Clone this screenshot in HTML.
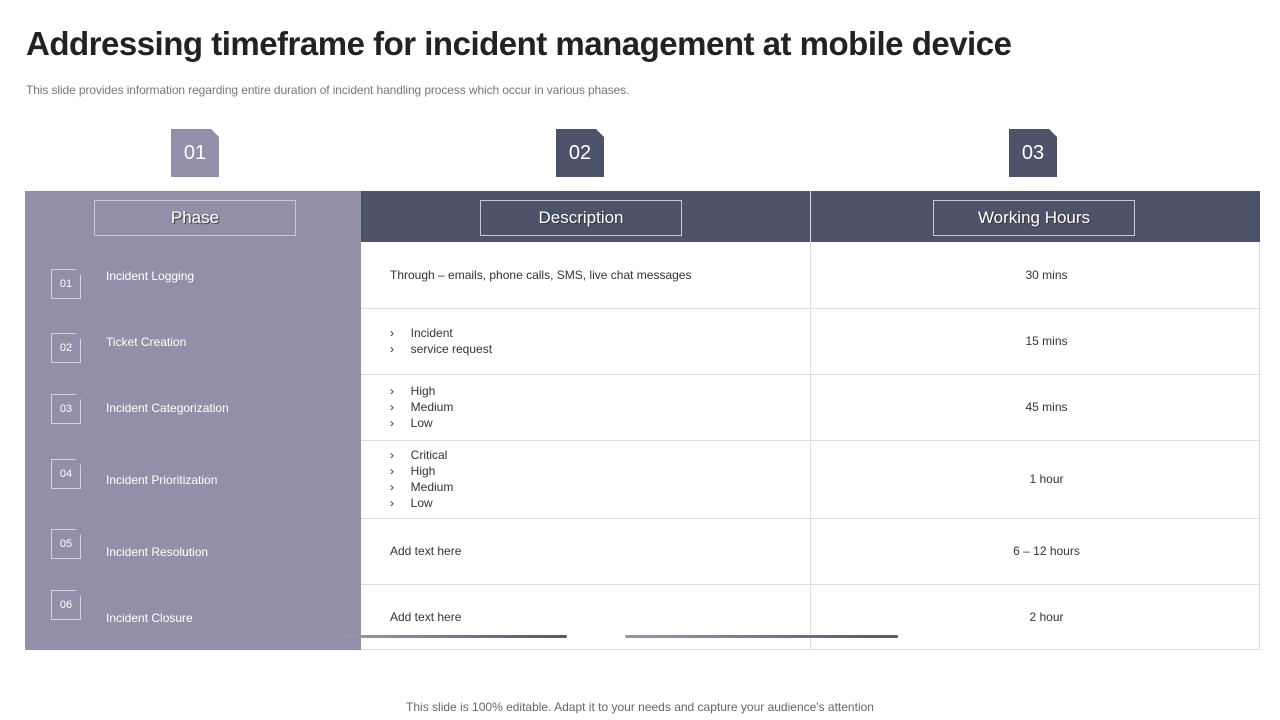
<!DOCTYPE html><html><head><style>
body{margin:0;width:1280px;height:720px;background:#fff;font-family:"Liberation Sans",sans-serif;position:relative;overflow:hidden}
.a{position:absolute}
h1{position:absolute;left:26px;top:25px;margin:0;font-size:33px;font-weight:bold;color:#222;letter-spacing:-0.5px}
.tab{position:absolute;top:129px;width:48px;height:48px;color:#fff;font-size:20px;text-align:center;line-height:48px;clip-path:polygon(0 0,40px 0,48px 8px,48px 48px,0 48px)}
.hb{position:absolute;top:200px;height:36px;border:1px solid #c9c7d6;color:#fff;font-size:17px;text-align:center;line-height:34px;text-shadow:1px 1px 1px #333;box-sizing:border-box}
.bd{position:absolute;left:51px;width:30px;height:30px;border:1px solid #d5d2e0;box-sizing:border-box;color:#fff;font-size:11px;text-align:center;line-height:28px;clip-path:polygon(0 0,24px 0,30px 6px,30px 30px,0 30px)}
.lb{position:absolute;left:106px;color:#fff;font-size:12px}
.t{position:absolute;font-size:12px;color:#333;line-height:16px}
.h{position:absolute;left:822px;width:449px;text-align:center;font-size:12px;color:#333}
.ln{position:absolute;left:361px;width:898px;height:1px;background:#ddd}
</style></head><body>
<h1>Addressing timeframe for incident management at mobile device</h1>
<div class="a" style="left:26px;top:83px;font-size:12px;color:#777;letter-spacing:-0.1px">This slide provides information regarding entire duration of incident handling process which occur in various phases.</div>
<div class="tab" style="left:171px;background:#948fa8">01</div>
<div class="tab" style="left:556px;background:#4d5469">02</div>
<div class="tab" style="left:1009px;background:#4d5469">03</div>
<div class="a" style="left:25px;top:191px;width:1235px;height:459px;border:1px solid #ddd;box-sizing:border-box"></div>
<div class="a" style="left:25px;top:191px;width:336px;height:459px;background:#948fa8"></div>
<div class="a" style="left:361px;top:191px;width:899px;height:51px;background:#4d5469"></div>
<div class="a" style="left:810px;top:191px;width:1px;height:459px;background:#ddd"></div>
<div class="hb" style="left:94px;width:202px">Phase</div>
<div class="hb" style="left:480px;width:202px">Description</div>
<div class="hb" style="left:933px;width:202px">Working Hours</div>
<div class="ln" style="top:308px"></div><div class="ln" style="top:374px"></div><div class="ln" style="top:440px"></div><div class="ln" style="top:518px"></div><div class="ln" style="top:584px"></div>
<div class="bd" style="top:269px">01</div><div class="lb" style="top:269px">Incident Logging</div>
<div class="bd" style="top:333px">02</div><div class="lb" style="top:335px">Ticket Creation</div>
<div class="bd" style="top:394px">03</div><div class="lb" style="top:401px">Incident Categorization</div>
<div class="bd" style="top:459px">04</div><div class="lb" style="top:473px">Incident Prioritization</div>
<div class="bd" style="top:529px">05</div><div class="lb" style="top:545px">Incident Resolution</div>
<div class="bd" style="top:590px">06</div><div class="lb" style="top:611px">Incident Closure</div>
<div class="t" style="left:390px;top:267px">Through – emails, phone calls, SMS, live chat messages</div>
<div class="t" style="left:390px;top:325px">›&nbsp;&nbsp;&nbsp;&nbsp;&nbsp;Incident<br>›&nbsp;&nbsp;&nbsp;&nbsp;&nbsp;service request</div>
<div class="t" style="left:390px;top:383px">›&nbsp;&nbsp;&nbsp;&nbsp;&nbsp;High<br>›&nbsp;&nbsp;&nbsp;&nbsp;&nbsp;Medium<br>›&nbsp;&nbsp;&nbsp;&nbsp;&nbsp;Low</div>
<div class="t" style="left:390px;top:447px">›&nbsp;&nbsp;&nbsp;&nbsp;&nbsp;Critical<br>›&nbsp;&nbsp;&nbsp;&nbsp;&nbsp;High<br>›&nbsp;&nbsp;&nbsp;&nbsp;&nbsp;Medium<br>›&nbsp;&nbsp;&nbsp;&nbsp;&nbsp;Low</div>
<div class="t" style="left:390px;top:543px">Add text here</div>
<div class="t" style="left:390px;top:609px">Add text here</div>
<div class="h" style="top:268px">30 mins</div>
<div class="h" style="top:334px">15 mins</div>
<div class="h" style="top:400px">45 mins</div>
<div class="h" style="top:472px">1 hour</div>
<div class="h" style="top:544px">6 – 12 hours</div>
<div class="h" style="top:610px">2 hour</div>
<div class="a" style="left:345px;top:635px;width:222px;height:3px;border-radius:2px;background:linear-gradient(90deg,#9a98a8,#555a66)"></div>
<div class="a" style="left:625px;top:635px;width:273px;height:3px;border-radius:2px;background:linear-gradient(90deg,#9a98a8,#555a66)"></div>
<div class="a" style="left:0;width:1280px;top:700px;text-align:center;font-size:12px;color:#666">This slide is 100% editable. Adapt it to your needs and capture your audience's attention</div>
</body></html>
